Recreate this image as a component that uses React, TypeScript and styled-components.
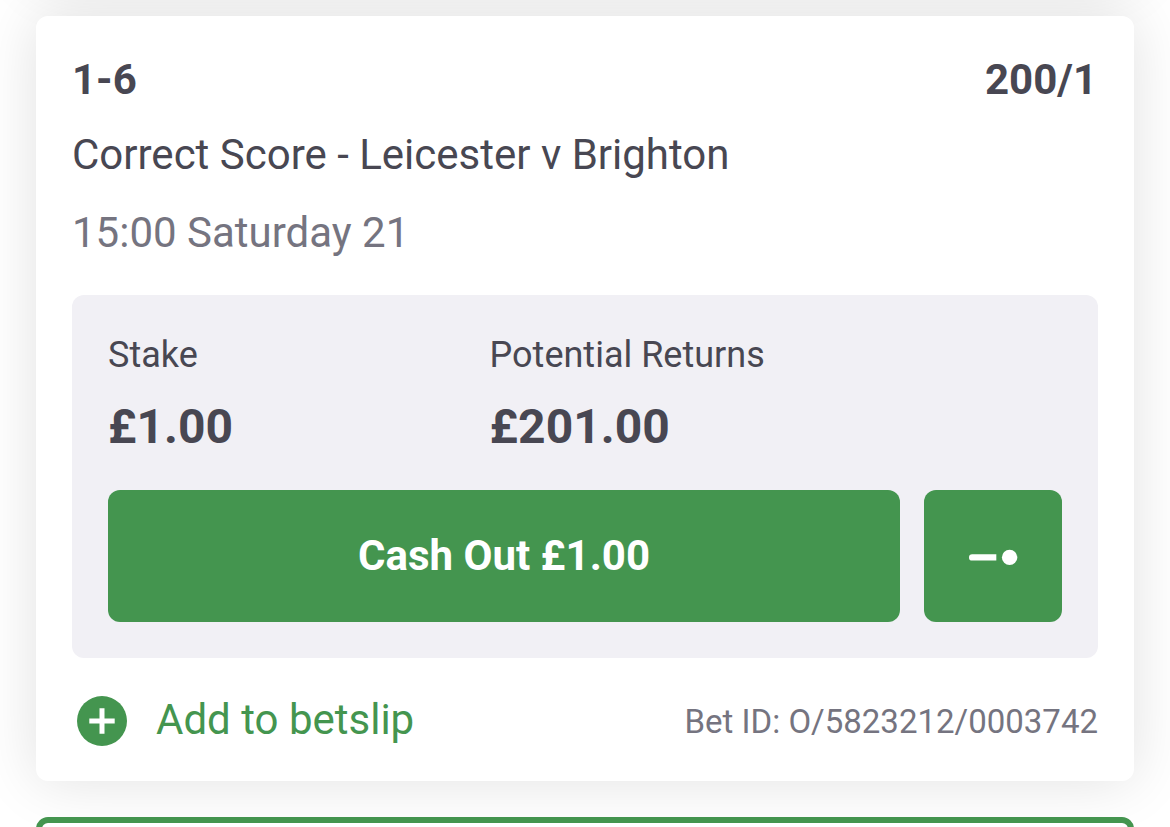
import React from "react";
import styled, { createGlobalStyle } from "styled-components";

const GlobalStyle = createGlobalStyle`
  * { box-sizing: border-box; }
  html { overflow: hidden; height: 100%; }
  body {
    margin: 0;
    height: 100%;
    overflow: hidden;
    background: #fff;
    color: #484752;
    font-family: Roboto, "Liberation Sans", sans-serif;
  }
  h2, p, dl, dt, dd { margin: 0; }
`;

const BetList = styled.main`
  display: flex;
  flex-direction: column;
  gap: 36px;
  padding: 16px 36px 0;
`;

const BetCard = styled.article`
  padding: 36px 36px 31px;
  border-radius: 12px;
  background: #fff;
  box-shadow:
    0 0 60px rgba(0, 0, 0, 0.12),
    0 -801px 60px rgba(0, 0, 0, 0.12);
`;

const Header = styled.header`
  display: flex;
  justify-content: space-between;
  padding-right: 1px;
`;

const Selection = styled.h2`
  font-size: 42px;
  line-height: 56px;
  font-weight: 700;
`;

const Odds = styled(Selection).attrs({ as: "p" })``;

const Details = styled.div`
  display: flex;
  flex-direction: column;
  gap: 22px;
  margin-top: 19px;
`;

const Line = styled.p<{ $muted?: boolean }>`
  font-size: 42px;
  line-height: 56px;
  color: ${(p) => (p.$muted ? "#757480" : "inherit")};
`;

const Panel = styled.section`
  margin-top: 34px;
  padding: 36px;
  border-radius: 12px;
  background: #f1f0f5;
`;

const Figures = styled.dl`
  display: grid;
  grid-template-columns: 2fr 3fr;
`;

const Label = styled.dt`
  font-size: 36px;
  line-height: 48px;
`;

const Amount = styled.dd`
  margin-top: 20px;
  font-size: 48px;
  line-height: 56px;
  font-weight: 700;
`;

const Actions = styled.div`
  display: flex;
  gap: 24px;
  margin-top: 35px;
`;

const GreenButton = styled.button`
  display: flex;
  align-items: center;
  justify-content: center;
  height: 132px;
  border: 0;
  border-radius: 12px;
  background: #44954f;
  color: #fff;
  font: 700 42px/56px Roboto, "Liberation Sans", sans-serif;
`;

const CashOut = styled(GreenButton)`
  flex: 1;
`;

const PartialCashOut = styled(GreenButton)`
  flex: 0 0 138px;
  padding: 0;
`;

const Footer = styled.footer`
  display: flex;
  align-items: center;
  justify-content: space-between;
  margin-top: 32px;
`;

const AddButton = styled.button`
  display: flex;
  align-items: center;
  gap: 28px;
  padding: 0 0 0 4px;
  border: 0;
  background: none;
  color: #44954f;
  font: 400 42px/60px Roboto, "Liberation Sans", sans-serif;
`;

const BetId = styled.p`
  padding-top: 4px;
  font-size: 33px;
  line-height: 48px;
  color: #757480;
`;

const NextCard = styled.div`
  height: 60px;
  border: 6px solid #44954f;
  border-radius: 12px;
  background: #fff;
`;

export default function App() {
  return (
    <>
      <GlobalStyle />
      <BetList>
        <BetCard>
          <Header>
            <Selection>1-6</Selection>
            <Odds>200/1</Odds>
          </Header>
          <Details>
            <Line>Correct Score - Leicester v Brighton</Line>
            <Line $muted>15:00 Saturday 21</Line>
          </Details>
          <Panel>
            <Figures>
              <div>
                <Label>Stake</Label>
                <Amount>£1.00</Amount>
              </div>
              <div>
                <Label>Potential Returns</Label>
                <Amount>£201.00</Amount>
              </div>
            </Figures>
            <Actions>
              <CashOut type="button">Cash Out £1.00</CashOut>
              <PartialCashOut type="button" aria-label="Partial cash out">
                <svg width="50" height="20" viewBox="0 0 50 20" fill="#fff" aria-hidden="true">
                  <path d="M28.3 8.2H4.2a3.2 3.2 0 0 0 0 6.4h24.1z" />
                  <circle cx="41.6" cy="11.4" r="7.7" />
                </svg>
              </PartialCashOut>
            </Actions>
          </Panel>
          <Footer>
            <AddButton type="button">
              <svg width="52" height="52" viewBox="0 0 52 52" aria-hidden="true">
                <circle cx="26" cy="27" r="25" fill="#44954f" />
                <path d="M26 14.3v25.4M13.3 27h25.4" stroke="#fff" strokeWidth="5" />
              </svg>
              Add to betslip
            </AddButton>
            <BetId>Bet ID: O/5823212/0003742</BetId>
          </Footer>
        </BetCard>
        <NextCard />
      </BetList>
    </>
  );
}
